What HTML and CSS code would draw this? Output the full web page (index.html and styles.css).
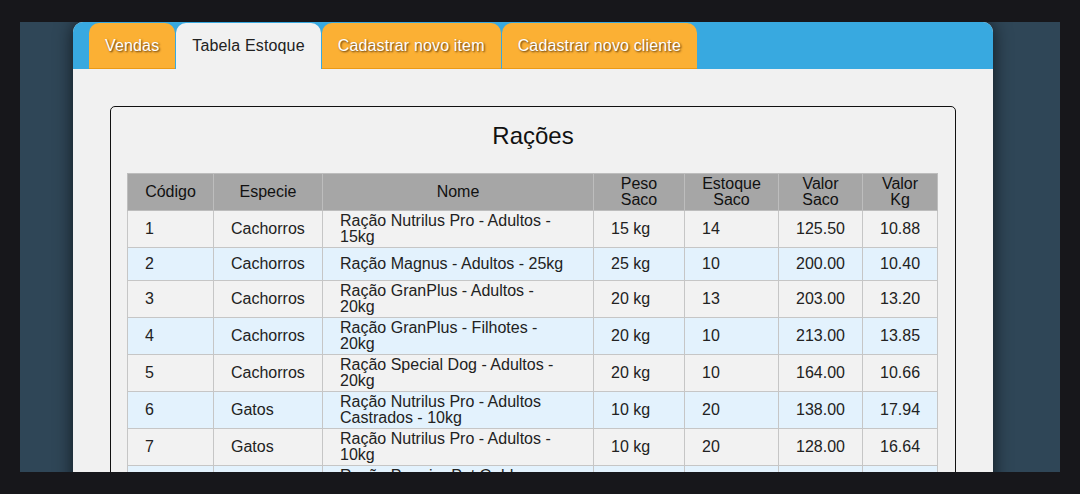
FILE: index.html
```html
<!DOCTYPE html>
<html lang="pt-BR">
<head>
<meta charset="utf-8">
<title>Tabela Estoque</title>
<link rel="stylesheet" href="styles.css">
</head>
<body>
<div class="frame">
  <div class="card">
    <nav class="tabs">
      <a class="tab">Vendas</a>
      <a class="tab active">Tabela Estoque</a>
      <a class="tab">Cadastrar novo item</a>
      <a class="tab">Cadastrar novo cliente</a>
    </nav>
    <main class="content">
      <section class="box">
        <h2 class="title">Rações</h2>
        <table class="stock">
          <thead>
            <tr>
              <th class="c-cod">Código</th>
              <th class="c-esp">Especie</th>
              <th class="c-nome">Nome</th>
              <th class="c-peso">Peso Saco</th>
              <th class="c-est">Estoque Saco</th>
              <th class="c-vs">Valor Saco</th>
              <th class="c-vk">Valor Kg</th>
            </tr>
          </thead>
          <tbody>
            <tr><td>1</td><td>Cachorros</td><td class="nome">Ração Nutrilus Pro - Adultos - 15kg</td><td>15 kg</td><td>14</td><td>125.50</td><td>10.88</td></tr>
            <tr><td>2</td><td>Cachorros</td><td class="nome">Ração Magnus - Adultos - 25kg</td><td>25 kg</td><td>10</td><td>200.00</td><td>10.40</td></tr>
            <tr><td>3</td><td>Cachorros</td><td class="nome">Ração GranPlus - Adultos - 20kg</td><td>20 kg</td><td>13</td><td>203.00</td><td>13.20</td></tr>
            <tr><td>4</td><td>Cachorros</td><td class="nome">Ração GranPlus - Filhotes - 20kg</td><td>20 kg</td><td>10</td><td>213.00</td><td>13.85</td></tr>
            <tr><td>5</td><td>Cachorros</td><td class="nome">Ração Special Dog - Adultos - 20kg</td><td>20 kg</td><td>10</td><td>164.00</td><td>10.66</td></tr>
            <tr><td>6</td><td>Gatos</td><td class="nome">Ração Nutrilus Pro - Adultos Castrados - 10kg</td><td>10 kg</td><td>20</td><td>138.00</td><td>17.94</td></tr>
            <tr><td>7</td><td>Gatos</td><td class="nome">Ração Nutrilus Pro - Adultos - 10kg</td><td>10 kg</td><td>20</td><td>128.00</td><td>16.64</td></tr>
            <tr><td>8</td><td>Gatos</td><td class="nome">Ração Premier Pet Golden - Adultos - 10kg</td><td>10 kg</td><td>15</td><td>145.00</td><td>18.85</td></tr>
          </tbody>
        </table>
      </section>
    </main>
  </div>
</div>
</body>
</html>
```

FILE: styles.css
```css
html, body {
  margin: 0;
  padding: 0;
}
body {
  background: #17171b;
  font-family: "Liberation Sans", Arial, sans-serif;
  font-size: 16px;
  color: #222;
}
.frame {
  margin: 22px 20px 0 20px;
  height: 450px;
  background: #2f4657;
  overflow: hidden;
}
.card {
  width: 920px;
  margin-left: 53px;
  min-height: 600px;
  background: #f1f1f1;
  border-radius: 10px 10px 0 0;
  box-shadow: 0 0 18px rgba(0, 0, 0, 0.65);
  overflow: hidden;
}
.tabs {
  display: flex;
  background: #38a9e0;
  padding: 1px 0 0 16px;
  height: 46px;
}
.tab {
  display: flex;
  align-items: center;
  padding: 0 16px;
  margin-right: 1px;
  height: 45px;
  background: #fbb034;
  border-bottom: 1px solid #eb9a15;
  border-radius: 10px 10px 0 0;
  color: #fff;
  letter-spacing: 0.15px;
  text-shadow: 1px 1px 2px rgba(60, 30, 0, 0.85);
  cursor: pointer;
}
.tab.active {
  background: #f1f1f1;
  border-bottom: 1px solid #f1f1f1;
  color: #222;
  text-shadow: none;
}
.content {
  padding: 37px;
}
.box {
  border: 1px solid #111;
  border-radius: 5px;
  padding: 15px 16px 40px 16px;
}
.title {
  margin: 0 0 23px 0;
  font-size: 24px;
  line-height: 28px;
  font-weight: normal;
  text-align: center;
  color: #111;
}
.stock {
  width: 810px;
  border-collapse: collapse;
  table-layout: fixed;
  line-height: 16px;
}
.stock th {
  box-sizing: border-box;
  background: #a6a6a6;
  font-weight: normal;
  color: #111;
  text-align: center;
  padding: 2px 17px;
  border: 1px solid #bdbdbd;
}
.stock td {
  padding: 8px 17px;
  border: 1px solid #c6c6c6;
  text-align: left;
  vertical-align: middle;
}
.stock td.nome {
  padding: 2px 24px 2px 17px;
}
.stock tbody tr:nth-child(odd) {
  background: #f2f2f2;
}
.stock tbody tr:nth-child(even) {
  background: #e3f2fd;
}
.c-cod { width: 86px; }
.c-esp { width: 109px; }
.c-nome { width: 271px; }
.c-peso { width: 91px; }
.c-est { width: 94px; }
.c-vs { width: 84px; }
.c-vk { width: 75px; }
```
